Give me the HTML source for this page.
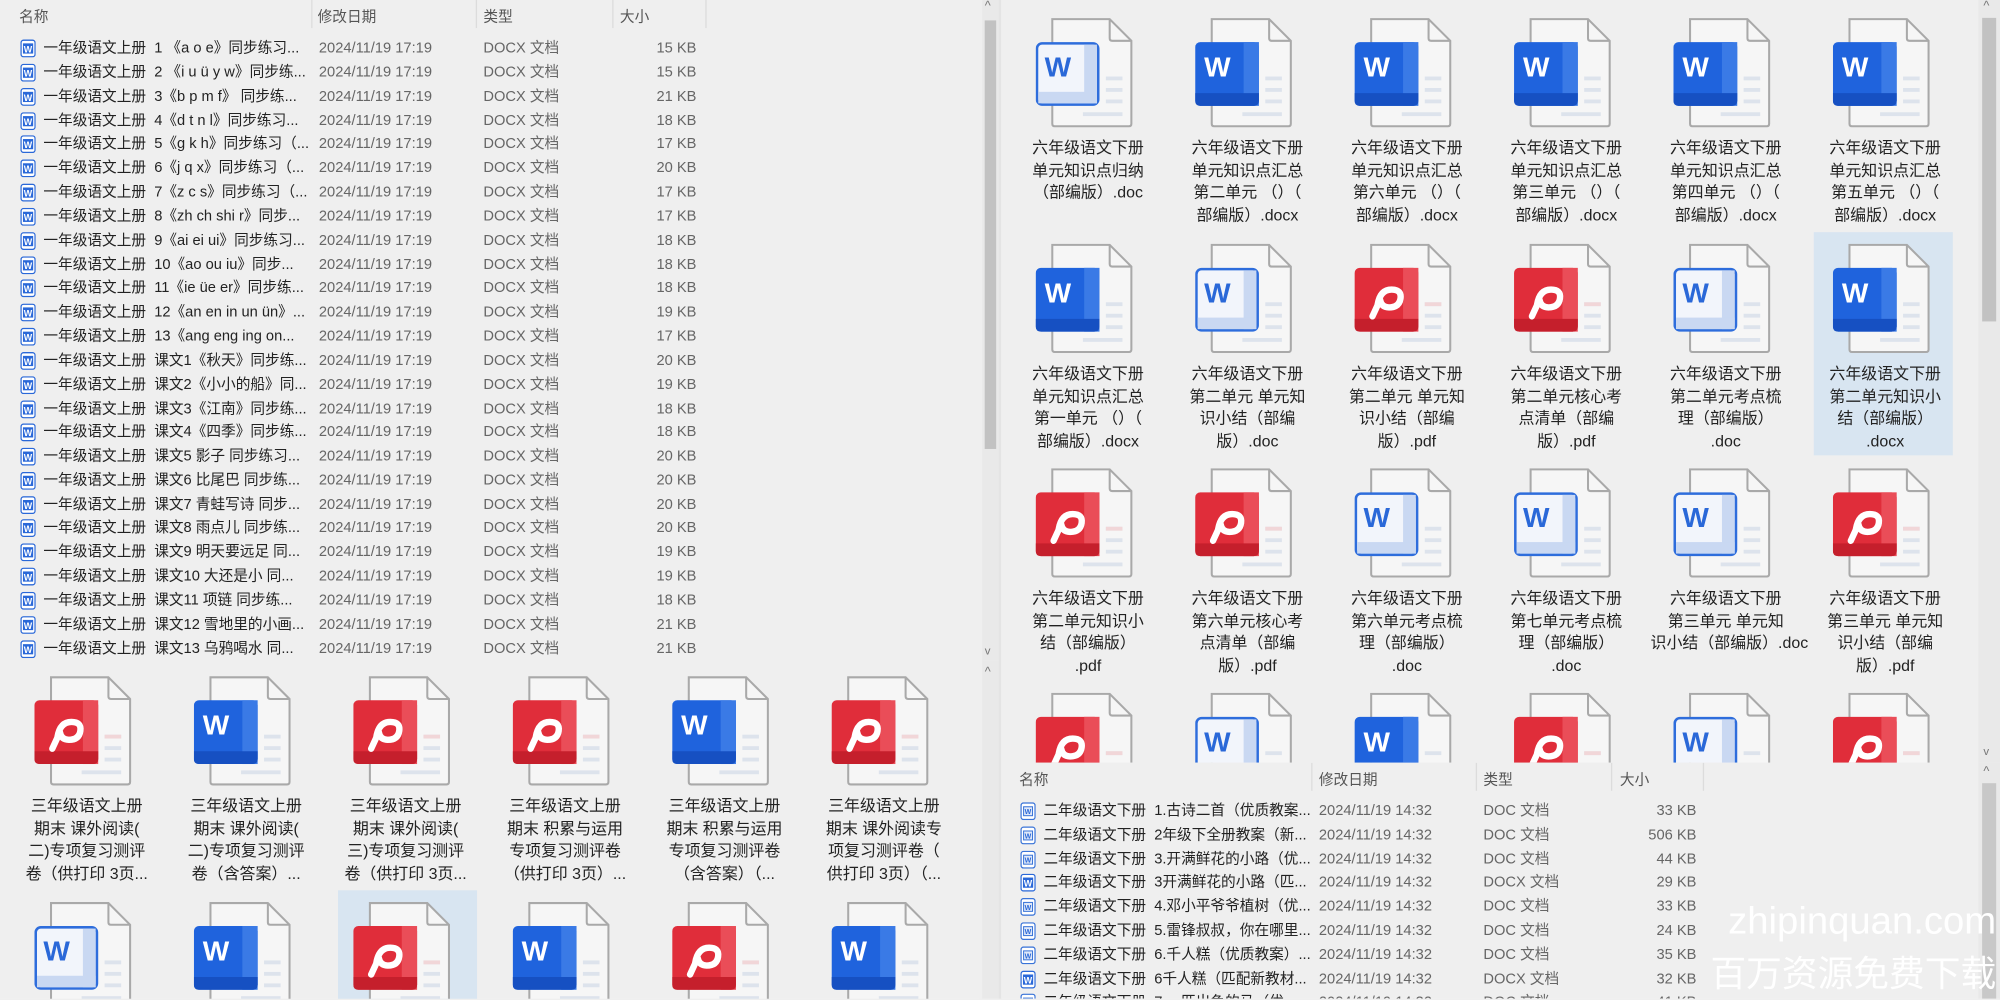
<!DOCTYPE html>
<html><head><meta charset="utf-8"><style>
html,body{margin:0;padding:0;width:2000px;height:1000px;overflow:hidden;background:#efefef}
#w{position:absolute;left:0;top:0;width:1568px;height:783px;overflow:hidden;transform:scale(1.27551);transform-origin:0 0;font-family:"Liberation Sans","Noto Sans CJK SC",sans-serif;color:#333;background:#efefef}
.a{position:absolute}
.hd{position:absolute;font-size:11.5px;color:#555;top:5px}
.sep{position:absolute;top:0;width:1px;height:22px;background:#dcdcdc}
.r{position:absolute;height:18px;font-size:11.5px;line-height:18px;white-space:nowrap}
.r .ic{position:absolute;left:0;top:2px;width:12px;height:14px}
.r .n{position:absolute;left:18px;color:#222}
.r .d{position:absolute;color:#666}
.r .y{position:absolute;color:#666}
.r .s{position:absolute;color:#666;text-align:right;width:60px}
.t{position:absolute;width:110px;height:176px}
.t svg{position:absolute;left:14px;top:0;width:80px;height:90px}
.t .l{position:absolute;left:-4px;top:94px;width:118px;text-align:center;font-size:12.5px;line-height:17.6px;color:#222;white-space:nowrap}
.sel{position:absolute;background:#d8e5f1}
</style></head><body><div id="w">
<svg width="0" height="0" style="position:absolute">
<defs>
<g id="doc"><path d="M13 1H58L75 18V83Q75 85 73 85H15Q13 85 13 83Z" fill="#f6f6f6" stroke="#a9a9a9" stroke-width="1.6"/><path d="M58 1V16Q58 18 60 18H75" fill="none" stroke="#a9a9a9" stroke-width="1.6"/><rect x="55" y="46" width="13" height="3" fill="#dde3ec"/><rect x="55" y="55" width="13" height="3" fill="#dde3ec"/><rect x="55" y="64" width="13" height="3" fill="#dde3ec"/><rect x="37" y="74" width="31" height="3" fill="#dde3ec"/></g>
<symbol id="ws" viewBox="0 0 80 90"><use href="#doc"/><rect x="0" y="19" width="50" height="50" rx="4" fill="#1f63dd"/><rect x="38" y="19" width="12" height="50" fill="#3a7ae6"/><path d="M0 59H50V65Q50 69 46 69H4Q0 69 0 65Z" fill="#1650c2"/><text x="7" y="46" font-family="Liberation Sans" font-weight="bold" font-size="22" fill="#fff">W</text></symbol>
<symbol id="wl" viewBox="0 0 80 90"><use href="#doc"/><rect x="1" y="20" width="48" height="48" rx="4" fill="#f2f5fb" stroke="#2e6ddc" stroke-width="2"/><rect x="38" y="21" width="10" height="46" fill="#c9d8f2"/><rect x="2" y="58" width="46" height="9" fill="#c9d8f2"/><text x="7" y="46" font-family="Liberation Sans" font-weight="bold" font-size="22" fill="#2a68d8">W</text></symbol>
<symbol id="pd" viewBox="0 0 80 90"><use href="#doc"/><rect x="0" y="19" width="50" height="50" rx="4" fill="#e02d3a"/><rect x="38" y="19" width="12" height="50" fill="#ea4d58"/><path d="M0 59H50V65Q50 69 46 69H4Q0 69 0 65Z" fill="#c51f2c"/><rect x="55" y="46" width="13" height="3" fill="#f1d6d8"/><path d="M14 57L20 44M18 48Q20 36 29 36Q37 36 36 43Q35 50 27 50Q21 50 20 44" fill="none" stroke="#fff" stroke-width="5" stroke-linecap="round"/></symbol>
<symbol id="sw" viewBox="0 0 12 14"><rect x="0.5" y="0.5" width="11" height="13" rx="2" fill="#fff" stroke="#2a68d8"/><rect x="2" y="3" width="8" height="8" fill="#2a68d8"/><text x="2.6" y="10" font-size="7" font-family="Liberation Sans" font-weight="bold" fill="#fff">W</text></symbol>
<symbol id="sl" viewBox="0 0 12 14"><rect x="0.5" y="0.5" width="11" height="13" rx="2" fill="#fff" stroke="#3a74d8"/><rect x="2.5" y="3.5" width="7" height="7" fill="#dfe8f8" stroke="#3a74d8" stroke-width=".8"/><text x="3.3" y="9.3" font-size="5.5" font-family="Liberation Sans" font-weight="bold" fill="#2a68d8">W</text></symbol>
</defs></svg>

<div class="a" style="left:0;top:0;width:768px;height:518px;background:#efefef;overflow:hidden">
<div class="hd" style="left:15px">名称</div><div class="hd" style="left:121px;top:-6px;font-size:11px;color:#888">^</div>
<div class="sep" style="left:244px"></div><div class="hd" style="left:249px">修改日期</div>
<div class="sep" style="left:373px"></div><div class="hd" style="left:379px">类型</div>
<div class="sep" style="left:480px"></div><div class="hd" style="left:486px">大小</div>
<div class="sep" style="left:553px"></div>
</div>
<div class="a" style="left:770px;top:0;width:13px;height:518px;background:#e9e9e9"><div class="a" style="left:2px;top:16px;width:9px;height:336px;background:#c2c2c2"></div><div class="a" style="left:2px;top:0;font-size:10px;color:#777">^</div><div class="a" style="left:2px;top:505px;font-size:9px;color:#777">v</div></div>

<div class="a" style="left:0;top:518px;width:768px;height:266px;overflow:hidden;background:#efefef">
<div class="sel" style="left:265px;top:180px;width:109px;height:100px"></div>
<div class="t" style="left:13px;top:12px"><svg><use href="#pd"/></svg><div class="l">三年级语文上册<br>期末 课外阅读(<br>二)专项复习测评<br>卷（供打印 3页...</div></div>
<div class="t" style="left:138px;top:12px"><svg><use href="#ws"/></svg><div class="l">三年级语文上册<br>期末 课外阅读(<br>二)专项复习测评<br>卷（含答案）...</div></div>
<div class="t" style="left:263px;top:12px"><svg><use href="#pd"/></svg><div class="l">三年级语文上册<br>期末 课外阅读(<br>三)专项复习测评<br>卷（供打印 3页...</div></div>
<div class="t" style="left:388px;top:12px"><svg><use href="#pd"/></svg><div class="l">三年级语文上册<br>期末 积累与运用<br>专项复习测评卷<br>（供打印 3页）...</div></div>
<div class="t" style="left:513px;top:12px"><svg><use href="#ws"/></svg><div class="l">三年级语文上册<br>期末 积累与运用<br>专项复习测评卷<br>（含答案）（...</div></div>
<div class="t" style="left:638px;top:12px"><svg><use href="#pd"/></svg><div class="l">三年级语文上册<br>期末 课外阅读专<br>项复习测评卷（<br>供打印 3页）（...</div></div>
<div class="t" style="left:13px;top:189px;height:77px"><svg><use href="#wl"/></svg></div>
<div class="t" style="left:138px;top:189px;height:77px"><svg><use href="#ws"/></svg></div>
<div class="t" style="left:263px;top:189px;height:77px"><svg><use href="#pd"/></svg></div>
<div class="t" style="left:388px;top:189px;height:77px"><svg><use href="#ws"/></svg></div>
<div class="t" style="left:513px;top:189px;height:77px"><svg><use href="#pd"/></svg></div>
<div class="t" style="left:638px;top:189px;height:77px"><svg><use href="#ws"/></svg></div>
</div>
<div class="a" style="left:770px;top:518px;width:13px;height:265px;background:#e9e9e9"><div class="a" style="left:2px;top:4px;font-size:10px;color:#777">^</div></div>
<div class="a" style="left:783px;top:0;width:2px;height:783px;background:#e4e4e4"></div>

<div class="a" style="left:785px;top:0;width:766px;height:598px;overflow:hidden;background:#efefef">
<div class="sel" style="left:637px;top:182px;width:109px;height:175px"></div>
<div class="t" style="left:13px;top:14px"><svg><use href="#wl"/></svg><div class="l">六年级语文下册<br>单元知识点归纳<br>（部编版）.doc</div></div>
<div class="t" style="left:138px;top:14px"><svg><use href="#ws"/></svg><div class="l">六年级语文下册<br>单元知识点汇总<br>第二单元 （）（<br>部编版）.docx</div></div>
<div class="t" style="left:263px;top:14px"><svg><use href="#ws"/></svg><div class="l">六年级语文下册<br>单元知识点汇总<br>第六单元 （）（<br>部编版）.docx</div></div>
<div class="t" style="left:388px;top:14px"><svg><use href="#ws"/></svg><div class="l">六年级语文下册<br>单元知识点汇总<br>第三单元 （）（<br>部编版）.docx</div></div>
<div class="t" style="left:513px;top:14px"><svg><use href="#ws"/></svg><div class="l">六年级语文下册<br>单元知识点汇总<br>第四单元 （）（<br>部编版）.docx</div></div>
<div class="t" style="left:638px;top:14px"><svg><use href="#ws"/></svg><div class="l">六年级语文下册<br>单元知识点汇总<br>第五单元 （）（<br>部编版）.docx</div></div>

<div class="t" style="left:13px;top:191px"><svg><use href="#ws"/></svg><div class="l">六年级语文下册<br>单元知识点汇总<br>第一单元 （）（<br>部编版）.docx</div></div>
<div class="t" style="left:138px;top:191px"><svg><use href="#wl"/></svg><div class="l">六年级语文下册<br>第二单元 单元知<br>识小结（部编<br>版）.doc</div></div>
<div class="t" style="left:263px;top:191px"><svg><use href="#pd"/></svg><div class="l">六年级语文下册<br>第二单元 单元知<br>识小结（部编<br>版）.pdf</div></div>
<div class="t" style="left:388px;top:191px"><svg><use href="#pd"/></svg><div class="l">六年级语文下册<br>第二单元核心考<br>点清单（部编<br>版）.pdf</div></div>
<div class="t" style="left:513px;top:191px"><svg><use href="#wl"/></svg><div class="l">六年级语文下册<br>第二单元考点梳<br>理（部编版）<br>.doc</div></div>
<div class="t" style="left:638px;top:191px"><svg><use href="#ws"/></svg><div class="l">六年级语文下册<br>第二单元知识小<br>结（部编版）<br>.docx</div></div>

<div class="t" style="left:13px;top:367px"><svg><use href="#pd"/></svg><div class="l">六年级语文下册<br>第二单元知识小<br>结（部编版）<br>.pdf</div></div>
<div class="t" style="left:138px;top:367px"><svg><use href="#pd"/></svg><div class="l">六年级语文下册<br>第六单元核心考<br>点清单（部编<br>版）.pdf</div></div>
<div class="t" style="left:263px;top:367px"><svg><use href="#wl"/></svg><div class="l">六年级语文下册<br>第六单元考点梳<br>理（部编版）<br>.doc</div></div>
<div class="t" style="left:388px;top:367px"><svg><use href="#wl"/></svg><div class="l">六年级语文下册<br>第七单元考点梳<br>理（部编版）<br>.doc</div></div>
<div class="t" style="left:513px;top:367px"><svg><use href="#wl"/></svg><div class="l">六年级语文下册<br>第三单元 单元知<br>识小结（部编版）.doc</div></div>
<div class="t" style="left:638px;top:367px"><svg><use href="#pd"/></svg><div class="l">六年级语文下册<br>第三单元 单元知<br>识小结（部编<br>版）.pdf</div></div>

<div class="t" style="left:13px;top:543px;height:55px;overflow:hidden"><svg><use href="#pd"/></svg></div>
<div class="t" style="left:138px;top:543px;height:55px;overflow:hidden"><svg><use href="#wl"/></svg></div>
<div class="t" style="left:263px;top:543px;height:55px;overflow:hidden"><svg><use href="#ws"/></svg></div>
<div class="t" style="left:388px;top:543px;height:55px;overflow:hidden"><svg><use href="#pd"/></svg></div>
<div class="t" style="left:513px;top:543px;height:55px;overflow:hidden"><svg><use href="#wl"/></svg></div>
<div class="t" style="left:638px;top:543px;height:55px;overflow:hidden"><svg><use href="#pd"/></svg></div>
</div>
<div class="a" style="left:1551px;top:0;width:17px;height:598px;background:#e9e9e9"><div class="a" style="left:3px;top:14px;width:11px;height:238px;background:#c2c2c2"></div><div class="a" style="left:4px;top:0;font-size:10px;color:#777">^</div><div class="a" style="left:4px;top:584px;font-size:9px;color:#777">v</div></div>

<div class="a" style="left:785px;top:598px;width:766px;height:185px;background:#efefef;overflow:hidden">
<div class="hd" style="left:14px;top:5px">名称</div><div class="hd" style="left:121px;top:-6px;font-size:11px;color:#888">^</div>
<div class="sep" style="left:243px"></div><div class="hd" style="left:249px;top:5px">修改日期</div>
<div class="sep" style="left:372px"></div><div class="hd" style="left:378px;top:5px">类型</div>
<div class="sep" style="left:478px"></div><div class="hd" style="left:485px;top:5px">大小</div>
<div class="sep" style="left:550px"></div>
<div class="r" style="left:15px;top:29px;width:540px"><svg class="ic"><use href="#sl"/></svg><span class="n">二年级语文下册&nbsp;&nbsp;1.古诗二首（优质教案...</span><span class="d" style="left:234px">2024/11/19 14:32</span><span class="y" style="left:363px">DOC 文档</span><span class="s" style="left:470px">33 KB</span></div>
<div class="r" style="left:15px;top:48px;width:540px"><svg class="ic"><use href="#sl"/></svg><span class="n">二年级语文下册&nbsp;&nbsp;2年级下全册教案（新...</span><span class="d" style="left:234px">2024/11/19 14:32</span><span class="y" style="left:363px">DOC 文档</span><span class="s" style="left:470px">506 KB</span></div>
<div class="r" style="left:15px;top:67px;width:540px"><svg class="ic"><use href="#sl"/></svg><span class="n">二年级语文下册&nbsp;&nbsp;3.开满鲜花的小路（优...</span><span class="d" style="left:234px">2024/11/19 14:32</span><span class="y" style="left:363px">DOC 文档</span><span class="s" style="left:470px">44 KB</span></div>
<div class="r" style="left:15px;top:85px;width:540px"><svg class="ic"><use href="#sw"/></svg><span class="n">二年级语文下册&nbsp;&nbsp;3开满鲜花的小路（匹...</span><span class="d" style="left:234px">2024/11/19 14:32</span><span class="y" style="left:363px">DOCX 文档</span><span class="s" style="left:470px">29 KB</span></div>
<div class="r" style="left:15px;top:104px;width:540px"><svg class="ic"><use href="#sl"/></svg><span class="n">二年级语文下册&nbsp;&nbsp;4.邓小平爷爷植树（优...</span><span class="d" style="left:234px">2024/11/19 14:32</span><span class="y" style="left:363px">DOC 文档</span><span class="s" style="left:470px">33 KB</span></div>
<div class="r" style="left:15px;top:123px;width:540px"><svg class="ic"><use href="#sl"/></svg><span class="n">二年级语文下册&nbsp;&nbsp;5.雷锋叔叔，你在哪里...</span><span class="d" style="left:234px">2024/11/19 14:32</span><span class="y" style="left:363px">DOC 文档</span><span class="s" style="left:470px">24 KB</span></div>
<div class="r" style="left:15px;top:142px;width:540px"><svg class="ic"><use href="#sl"/></svg><span class="n">二年级语文下册&nbsp;&nbsp;6.千人糕（优质教案）...</span><span class="d" style="left:234px">2024/11/19 14:32</span><span class="y" style="left:363px">DOC 文档</span><span class="s" style="left:470px">35 KB</span></div>
<div class="r" style="left:15px;top:161px;width:540px"><svg class="ic"><use href="#sw"/></svg><span class="n">二年级语文下册&nbsp;&nbsp;6千人糕（匹配新教材...</span><span class="d" style="left:234px">2024/11/19 14:32</span><span class="y" style="left:363px">DOCX 文档</span><span class="s" style="left:470px">32 KB</span></div>
<div class="r" style="left:15px;top:179px;width:540px;height:6px;overflow:hidden"><svg class="ic"><use href="#sl"/></svg><span class="n">二年级语文下册&nbsp;&nbsp;7.一匹出色的马（优...</span><span class="d" style="left:234px">2024/11/19 14:32</span><span class="y" style="left:363px">DOC 文档</span><span class="s" style="left:470px">41 KB</span></div>
</div>
<div class="a" style="left:1551px;top:598px;width:17px;height:185px;background:#e9e9e9"><div class="a" style="left:3px;top:16px;width:11px;height:169px;background:#c8c8c8"></div><div class="a" style="left:4px;top:2px;font-size:10px;color:#777">^</div></div>

<div class="r" style="left:16px;top:29px;width:540px"><svg class="ic"><use href="#sw"/></svg><span class="n">一年级语文上册&nbsp;&nbsp;1 《a o e》同步练习...</span><span class="d" style="left:234px">2024/11/19 17:19</span><span class="y" style="left:363px">DOCX 文档</span><span class="s" style="left:470px">15 KB</span></div>
<div class="r" style="left:16px;top:48px;width:540px"><svg class="ic"><use href="#sw"/></svg><span class="n">一年级语文上册&nbsp;&nbsp;2 《i u ü y w》同步练...</span><span class="d" style="left:234px">2024/11/19 17:19</span><span class="y" style="left:363px">DOCX 文档</span><span class="s" style="left:470px">15 KB</span></div>
<div class="r" style="left:16px;top:67px;width:540px"><svg class="ic"><use href="#sw"/></svg><span class="n">一年级语文上册&nbsp;&nbsp;3《b p m f》 同步练...</span><span class="d" style="left:234px">2024/11/19 17:19</span><span class="y" style="left:363px">DOCX 文档</span><span class="s" style="left:470px">21 KB</span></div>
<div class="r" style="left:16px;top:86px;width:540px"><svg class="ic"><use href="#sw"/></svg><span class="n">一年级语文上册&nbsp;&nbsp;4《d t n l》同步练习...</span><span class="d" style="left:234px">2024/11/19 17:19</span><span class="y" style="left:363px">DOCX 文档</span><span class="s" style="left:470px">18 KB</span></div>
<div class="r" style="left:16px;top:104px;width:540px"><svg class="ic"><use href="#sw"/></svg><span class="n">一年级语文上册&nbsp;&nbsp;5《g k h》同步练习（...</span><span class="d" style="left:234px">2024/11/19 17:19</span><span class="y" style="left:363px">DOCX 文档</span><span class="s" style="left:470px">17 KB</span></div>
<div class="r" style="left:16px;top:123px;width:540px"><svg class="ic"><use href="#sw"/></svg><span class="n">一年级语文上册&nbsp;&nbsp;6《j q x》同步练习（...</span><span class="d" style="left:234px">2024/11/19 17:19</span><span class="y" style="left:363px">DOCX 文档</span><span class="s" style="left:470px">20 KB</span></div>
<div class="r" style="left:16px;top:142px;width:540px"><svg class="ic"><use href="#sw"/></svg><span class="n">一年级语文上册&nbsp;&nbsp;7《z c s》同步练习（...</span><span class="d" style="left:234px">2024/11/19 17:19</span><span class="y" style="left:363px">DOCX 文档</span><span class="s" style="left:470px">17 KB</span></div>
<div class="r" style="left:16px;top:161px;width:540px"><svg class="ic"><use href="#sw"/></svg><span class="n">一年级语文上册&nbsp;&nbsp;8《zh ch shi r》同步...</span><span class="d" style="left:234px">2024/11/19 17:19</span><span class="y" style="left:363px">DOCX 文档</span><span class="s" style="left:470px">17 KB</span></div>
<div class="r" style="left:16px;top:180px;width:540px"><svg class="ic"><use href="#sw"/></svg><span class="n">一年级语文上册&nbsp;&nbsp;9《ai ei ui》同步练习...</span><span class="d" style="left:234px">2024/11/19 17:19</span><span class="y" style="left:363px">DOCX 文档</span><span class="s" style="left:470px">18 KB</span></div>
<div class="r" style="left:16px;top:199px;width:540px"><svg class="ic"><use href="#sw"/></svg><span class="n">一年级语文上册&nbsp;&nbsp;10《ao ou iu》同步...</span><span class="d" style="left:234px">2024/11/19 17:19</span><span class="y" style="left:363px">DOCX 文档</span><span class="s" style="left:470px">18 KB</span></div>
<div class="r" style="left:16px;top:217px;width:540px"><svg class="ic"><use href="#sw"/></svg><span class="n">一年级语文上册&nbsp;&nbsp;11《ie üe er》同步练...</span><span class="d" style="left:234px">2024/11/19 17:19</span><span class="y" style="left:363px">DOCX 文档</span><span class="s" style="left:470px">18 KB</span></div>
<div class="r" style="left:16px;top:236px;width:540px"><svg class="ic"><use href="#sw"/></svg><span class="n">一年级语文上册&nbsp;&nbsp;12《an en in un ün》...</span><span class="d" style="left:234px">2024/11/19 17:19</span><span class="y" style="left:363px">DOCX 文档</span><span class="s" style="left:470px">19 KB</span></div>
<div class="r" style="left:16px;top:255px;width:540px"><svg class="ic"><use href="#sw"/></svg><span class="n">一年级语文上册&nbsp;&nbsp;13《ang eng ing on...</span><span class="d" style="left:234px">2024/11/19 17:19</span><span class="y" style="left:363px">DOCX 文档</span><span class="s" style="left:470px">17 KB</span></div>
<div class="r" style="left:16px;top:274px;width:540px"><svg class="ic"><use href="#sw"/></svg><span class="n">一年级语文上册&nbsp;&nbsp;课文1《秋天》同步练...</span><span class="d" style="left:234px">2024/11/19 17:19</span><span class="y" style="left:363px">DOCX 文档</span><span class="s" style="left:470px">20 KB</span></div>
<div class="r" style="left:16px;top:293px;width:540px"><svg class="ic"><use href="#sw"/></svg><span class="n">一年级语文上册&nbsp;&nbsp;课文2《小小的船》同...</span><span class="d" style="left:234px">2024/11/19 17:19</span><span class="y" style="left:363px">DOCX 文档</span><span class="s" style="left:470px">19 KB</span></div>
<div class="r" style="left:16px;top:312px;width:540px"><svg class="ic"><use href="#sw"/></svg><span class="n">一年级语文上册&nbsp;&nbsp;课文3《江南》同步练...</span><span class="d" style="left:234px">2024/11/19 17:19</span><span class="y" style="left:363px">DOCX 文档</span><span class="s" style="left:470px">18 KB</span></div>
<div class="r" style="left:16px;top:330px;width:540px"><svg class="ic"><use href="#sw"/></svg><span class="n">一年级语文上册&nbsp;&nbsp;课文4《四季》同步练...</span><span class="d" style="left:234px">2024/11/19 17:19</span><span class="y" style="left:363px">DOCX 文档</span><span class="s" style="left:470px">18 KB</span></div>
<div class="r" style="left:16px;top:349px;width:540px"><svg class="ic"><use href="#sw"/></svg><span class="n">一年级语文上册&nbsp;&nbsp;课文5 影子 同步练习...</span><span class="d" style="left:234px">2024/11/19 17:19</span><span class="y" style="left:363px">DOCX 文档</span><span class="s" style="left:470px">20 KB</span></div>
<div class="r" style="left:16px;top:368px;width:540px"><svg class="ic"><use href="#sw"/></svg><span class="n">一年级语文上册&nbsp;&nbsp;课文6 比尾巴 同步练...</span><span class="d" style="left:234px">2024/11/19 17:19</span><span class="y" style="left:363px">DOCX 文档</span><span class="s" style="left:470px">20 KB</span></div>
<div class="r" style="left:16px;top:387px;width:540px"><svg class="ic"><use href="#sw"/></svg><span class="n">一年级语文上册&nbsp;&nbsp;课文7 青蛙写诗 同步...</span><span class="d" style="left:234px">2024/11/19 17:19</span><span class="y" style="left:363px">DOCX 文档</span><span class="s" style="left:470px">20 KB</span></div>
<div class="r" style="left:16px;top:405px;width:540px"><svg class="ic"><use href="#sw"/></svg><span class="n">一年级语文上册&nbsp;&nbsp;课文8 雨点儿 同步练...</span><span class="d" style="left:234px">2024/11/19 17:19</span><span class="y" style="left:363px">DOCX 文档</span><span class="s" style="left:470px">20 KB</span></div>
<div class="r" style="left:16px;top:424px;width:540px"><svg class="ic"><use href="#sw"/></svg><span class="n">一年级语文上册&nbsp;&nbsp;课文9 明天要远足 同...</span><span class="d" style="left:234px">2024/11/19 17:19</span><span class="y" style="left:363px">DOCX 文档</span><span class="s" style="left:470px">19 KB</span></div>
<div class="r" style="left:16px;top:443px;width:540px"><svg class="ic"><use href="#sw"/></svg><span class="n">一年级语文上册&nbsp;&nbsp;课文10 大还是小 同...</span><span class="d" style="left:234px">2024/11/19 17:19</span><span class="y" style="left:363px">DOCX 文档</span><span class="s" style="left:470px">19 KB</span></div>
<div class="r" style="left:16px;top:462px;width:540px"><svg class="ic"><use href="#sw"/></svg><span class="n">一年级语文上册&nbsp;&nbsp;课文11 项链 同步练...</span><span class="d" style="left:234px">2024/11/19 17:19</span><span class="y" style="left:363px">DOCX 文档</span><span class="s" style="left:470px">18 KB</span></div>
<div class="r" style="left:16px;top:481px;width:540px"><svg class="ic"><use href="#sw"/></svg><span class="n">一年级语文上册&nbsp;&nbsp;课文12 雪地里的小画...</span><span class="d" style="left:234px">2024/11/19 17:19</span><span class="y" style="left:363px">DOCX 文档</span><span class="s" style="left:470px">21 KB</span></div>
<div class="r" style="left:16px;top:500px;width:540px"><svg class="ic"><use href="#sw"/></svg><span class="n">一年级语文上册&nbsp;&nbsp;课文13 乌鸦喝水 同...</span><span class="d" style="left:234px">2024/11/19 17:19</span><span class="y" style="left:363px">DOCX 文档</span><span class="s" style="left:470px">21 KB</span></div>

<div class="a" style="left:1340px;top:706px;width:225px;text-align:right;font-size:30px;color:#fff;line-height:34px">zhipinquan.com</div>
<div class="a" style="left:1336px;top:744px;width:229px;text-align:right;font-size:28px;color:#fff;font-family:'Noto Sans CJK SC',sans-serif;line-height:36px">百万资源免费下载</div>
</div></body></html>
